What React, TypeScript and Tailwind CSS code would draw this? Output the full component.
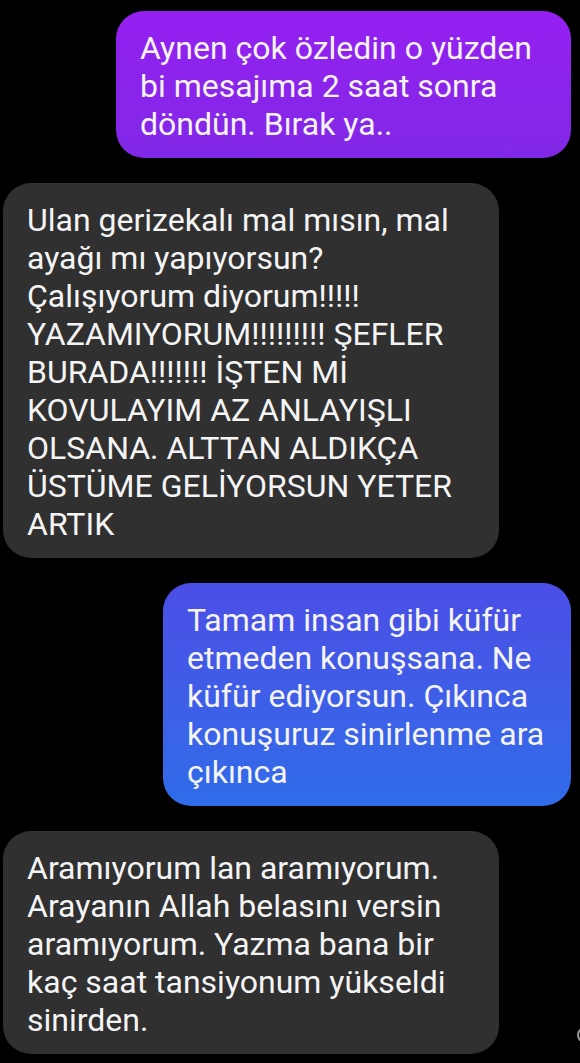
const font = { fontFamily: "Roboto, 'Noto Sans', sans-serif" }

type Msg = { side: "left" | "right"; width: string; bg: string; lines: string[] }

const messages: Msg[] = [
  {
    side: "right",
    width: "w-[455px]",
    bg: "bg-gradient-to-b from-[#951ff1] to-[#8128e6]",
    lines: ["Aynen çok özledin o yüzden", "bi mesajıma 2 saat sonra", "döndün. Bırak ya.."],
  },
  {
    side: "left",
    width: "w-[496px]",
    bg: "bg-[#303030]",
    lines: [
      "Ulan gerizekalı mal mısın, mal",
      "ayağı mı yapıyorsun?",
      "Çalışıyorum diyorum!!!!!",
      "YAZAMIYORUM!!!!!!!!! ŞEFLER",
      "BURADA!!!!!!! İŞTEN Mİ",
      "KOVULAYIM AZ ANLAYIŞLI",
      "OLSANA. ALTTAN ALDIKÇA",
      "ÜSTÜME GELİYORSUN YETER",
      "ARTIK",
    ],
  },
  {
    side: "right",
    width: "w-[408px]",
    bg: "bg-gradient-to-b from-[#4a4ee6] to-[#2e6ce9]",
    lines: [
      "Tamam insan gibi küfür",
      "etmeden konuşsana. Ne",
      "küfür ediyorsun. Çıkınca",
      "konuşuruz sinirlenme ara",
      "çıkınca",
    ],
  },
  {
    side: "left",
    width: "w-[496px]",
    bg: "bg-[#303030]",
    lines: [
      "Aramıyorum lan aramıyorum.",
      "Arayanın Allah belasını versin",
      "aramıyorum. Yazma bana bir",
      "kaç saat tansiyonum yükseldi",
      "sinirden.",
    ],
  },
]

export default function App() {
  return (
    <div className="relative h-[1063px] w-[580px] overflow-hidden bg-black" style={font}>
      <div className="flex flex-col gap-[25px] pt-[11px]">
        {messages.map((m, i) => (
          <div
            key={i}
            className={m.side === "right" ? "flex justify-end pr-[9px]" : "flex justify-start pl-[3px]"}
          >
            <div
              className={`${m.width} ${m.bg} rounded-[28px] pl-[24px] pr-3 pt-[18px] pb-[15px] text-[32px] leading-[38px] text-[#f4f4f4]`}
            >
              {m.lines.map((line, j) => (
                <div key={j} className="whitespace-nowrap">
                  {line}
                </div>
              ))}
            </div>
          </div>
        ))}
      </div>
      {/* seen indicator, cut off by the screen edge */}
      <div className="absolute left-[577px] top-[1027px] h-[16px] w-[16px] rounded-full border-2 border-[#9a9a9a]" />
    </div>
  )
}
